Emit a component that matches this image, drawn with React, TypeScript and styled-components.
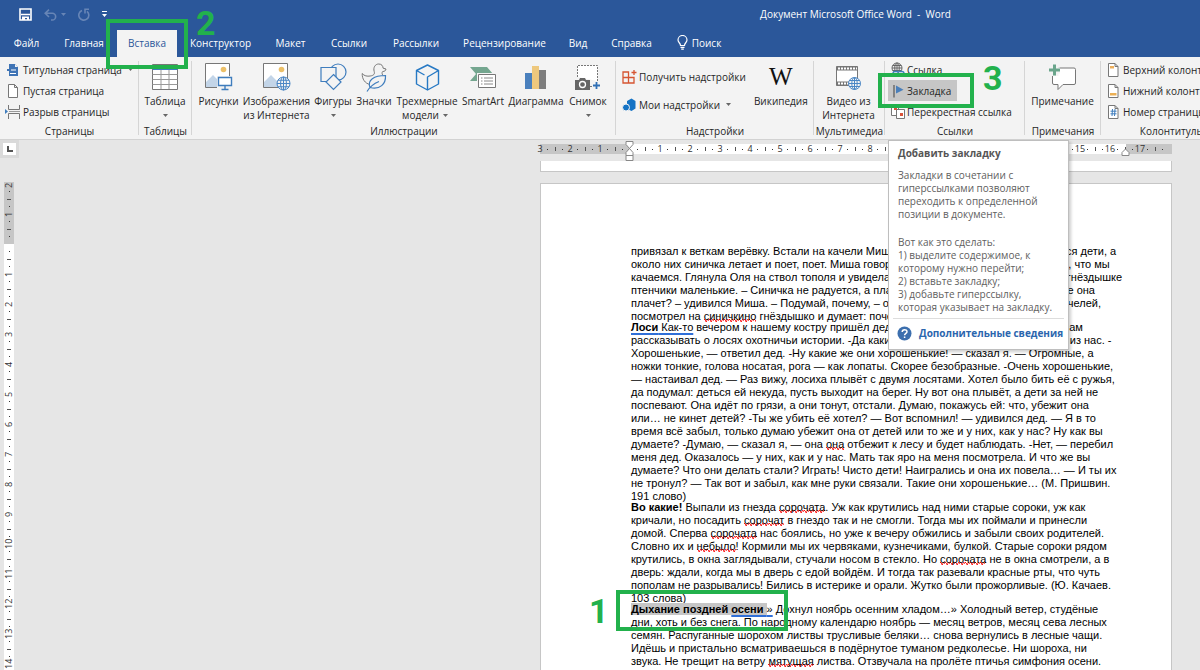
import React from "react";
import styled, { createGlobalStyle, css } from "styled-components";

const GREEN = "#22b14c";
const BLUE = "#2b579a";

const GlobalStyle = createGlobalStyle`
  *, *::before, *::after { box-sizing: border-box; }
  body { margin: 0; font-family: "Open Sans", "Noto Sans", sans-serif; font-size: 10px; color: #262626; }
  button { font: inherit; color: inherit; background: none; border: 0; padding: 0; margin: 0; }
  p, h2 { margin: 0; }
`;

const Window = styled.div`
  display: flex;
  flex-direction: column;
  height: 100vh;
  overflow: hidden;
  background: #e6e6e6;
`;

/* ---------- title bar and tabs ---------- */

const Header = styled.header`
  background: ${BLUE};
  color: #fff;
`;

const TitleRow = styled.div`
  display: flex;
  align-items: center;
  height: 29px;
  padding: 0 249px 0 19px;
`;

const QuickAccess = styled.div`
  display: flex;
  align-items: center;
  gap: 12px;
  flex: 1;
`;

const QuickButton = styled.button<{ $dim?: boolean }>`
  display: flex;
  align-items: center;
  gap: 4px;
  height: 16px;
  color: ${(p) => (p.$dim ? "#6785b6" : "#fff")};
`;

const Title = styled.div`
  white-space: pre;
  padding-bottom: 2px;
`;

const TabRow = styled.div`
  display: flex;
  align-items: flex-end;
  height: 28px;
`;

const Tab = styled.button<{ $active?: boolean; $w: number }>`
  position: relative;
  display: flex;
  align-items: center;
  justify-content: center;
  gap: 4px;
  flex: none;
  width: ${(p) => p.$w}px;
  height: 27px;
  padding-bottom: 2px;
  white-space: nowrap;
  ${(p) =>
    p.$active &&
    css`
      background: #f3f3f3;
      color: ${BLUE};
      margin: 0 1px 0 2px;
    `}
`;

/* ---------- green tutorial marks ---------- */

const Mark = styled.span<{ $x: number; $y: number; $w: number; $h: number }>`
  position: absolute;
  z-index: 5;
  left: ${(p) => p.$x}px;
  top: ${(p) => p.$y}px;
  width: ${(p) => p.$w}px;
  height: ${(p) => p.$h}px;
  border: 4px solid ${GREEN};
  pointer-events: none;
`;

const MarkNumber = styled.span<{ $x: number; $y: number }>`
  position: absolute;
  z-index: 5;
  left: ${(p) => p.$x}px;
  top: ${(p) => p.$y}px;
  font: bold 34px/34px Roboto, sans-serif;
  color: ${GREEN};
  pointer-events: none;
`;

/* ---------- ribbon ---------- */

const Ribbon = styled.div`
  display: flex;
  flex: none;
  height: 83px;
  background: #f3f3f3;
  border-bottom: 1px solid #d2d2d2;
`;

const Group = styled.section<{ $w: number }>`
  position: relative;
  display: flex;
  flex-direction: column;
  flex: none;
  width: ${(p) => p.$w}px;
  padding-top: 2px;
  &::after {
    content: "";
    position: absolute;
    right: 0;
    top: 4px;
    bottom: 4px;
    border-right: 1px solid #d5d5d5;
  }
`;

const GroupBody = styled.div<{ $pad?: number }>`
  display: flex;
  flex: 1;
  padding-left: ${(p) => p.$pad ?? 0}px;
`;

const GroupLabel = styled.div`
  height: 16px;
  line-height: 16px;
  text-align: center;
  white-space: nowrap;
`;

const Stack = styled.div<{ $spread?: boolean }>`
  display: flex;
  flex-direction: column;
  align-items: flex-start;
  ${(p) =>
    p.$spread &&
    css`
      gap: 7px;
      padding-top: 7px;
    `}
`;

const SmallButton = styled.button<{ $on?: boolean }>`
  position: relative;
  display: flex;
  align-items: center;
  gap: 2px;
  height: 21px;
  padding: 0 6px 0 3px;
  white-space: nowrap;
  background: ${(p) => (p.$on ? "#c6c6c6" : "none")};
  svg { flex: none; overflow: visible; }
`;

const BigButton = styled.button<{ $w: number }>`
  display: flex;
  flex-direction: column;
  align-items: center;
  flex: none;
  width: ${(p) => p.$w}px;
  line-height: 14px;
  white-space: nowrap;
`;

const IconBox = styled.span`
  display: flex;
  align-items: center;
  justify-content: center;
  height: 35px;
  padding-top: 1px;
`;

const WikiGlyph = styled.span`
  font: 25px/30px "Liberation Serif", serif;
  color: #111;
`;

const ArrowBox = styled.span`
  display: inline-flex;
  align-items: center;
  justify-content: center;
  height: 14px;
  padding: 0 4px;
  vertical-align: top;
`;

const Arrow = () => (
  <ArrowBox>
    <svg width="5" height="3" viewBox="0 0 5 3"><path d="M0 0h5L2.500 3z" fill="#666" /></svg>
  </ArrowBox>
);

/* ---------- screen tip ---------- */

const Tip = styled.div`
  position: absolute;
  z-index: 4;
  left: 3px;
  top: 83px;
  width: 181px;
  padding: 6px 4px 4px;
  background: #fff;
  border: 1px solid #bebebe;
  box-shadow: 2px 2px 3px rgba(0, 0, 0, 0.2);
  color: #606060;
  line-height: 13px;
  white-space: nowrap;
  svg { flex: none; }
`;

const TipTitle = styled.h2`
  padding: 0 5px;
  font-size: 10px;
  line-height: 13px;
  font-weight: bold;
  color: #555;
  margin-bottom: 9px;
`;

const TipText = styled.p`
  padding: 0 5px;
  margin-bottom: 15px;
  & + & { margin-bottom: 4px; }
`;

const TipFooter = styled.div`
  display: flex;
  align-items: center;
  gap: 7px;
  height: 27px;
  padding: 2px 0 0 4px;
  border-top: 1px solid #ddd;
`;

const TipLink = styled.a`
  color: #2b66ae;
  font-weight: bold;
  text-decoration: none;
`;

/* ---------- work area ---------- */

const WorkArea = styled.main`
  display: flex;
  flex: 1;
  min-height: 0;
  overflow: hidden;
`;

const SideColumn = styled.div`
  display: flex;
  flex-direction: column;
  flex: none;
  width: 19px;
`;

const TabSelector = styled.button`
  display: flex;
  align-items: center;
  justify-content: center;
  flex: none;
  width: 19px;
  height: 18px;
  border: 3px solid #dadada;
  background: #fff;
`;

const VRuler = styled.div`
  display: flex;
  flex-direction: column;
  flex: none;
  width: 10px;
  margin: 24px 0 0 4px;
  padding-top: 2px;
  background: linear-gradient(#c6c6c6 62px, #fff 62px);
`;

const HRuler = styled.div`
  position: relative;
  display: flex;
  flex: none;
  height: 10px;
  margin-top: 4px;
  background: linear-gradient(90deg, #c6c6c6 90px, #fff 90px, #fff calc(100% - 46px), #c6c6c6 calc(100% - 46px));
`;

const Cell = styled.div<{ $v?: boolean }>`
  position: relative;
  display: flex;
  flex: none;
  align-items: center;
  justify-content: space-evenly;
  font-size: 9px;
  line-height: 10px;
  color: #333;
  ${(p) =>
    p.$v
      ? css`flex-direction: column; width: 10px; height: 30px;`
      : css`width: 30px; height: 10px;`}
`;

const Num = styled.span<{ $v?: boolean; $start?: boolean }>`
  position: absolute;
  display: flex;
  justify-content: center;
  ${(p) =>
    p.$v
      ? css`left: 0; height: 16px; width: 10px; writing-mode: vertical-rl; transform: rotate(180deg);`
      : css`top: 0; width: 16px; height: 10px;`}
  ${(p) => (p.$v ? (p.$start ? "top: -7px;" : "bottom: -8px;") : p.$start ? "left: -8px;" : "right: -8px;")}
`;

const Dot = styled.i`
  width: 1px;
  height: 1px;
  background: #333;
`;

const Tick = styled.i<{ $v?: boolean }>`
  background: #555;
  ${(p) => (p.$v ? css`width: 4px; height: 1px;` : css`width: 1px; height: 4px;`)}
`;

const Center = styled.div`
  display: flex;
  flex-direction: column;
  flex: none;
  width: 632px;
  margin: 0 28px 0 auto;
`;

const RulerMarker = styled.svg<{ $x: number; $y: number }>`
  position: absolute;
  z-index: 2;
  left: ${(p) => p.$x}px;
  top: ${(p) => p.$y}px;
`;

const PreviousPage = styled.div`
  flex: none;
  height: 11px;
  margin-top: 7px;
  background: #fff;
  border: 1px solid #c6c6c6;
  border-top: 0;
`;

const Sheet = styled.article`
  position: relative;
  flex: 1 0 auto;
  margin-top: 11px;
  padding: 61px 0 0 90px;
  background: #fff;
  border: 1px solid #c6c6c6;
  border-bottom: 0;
  font: 11px/13px "Liberation Sans", Arial, sans-serif;
  color: #000;
`;

const Paragraph = styled.p`
  white-space: pre;
  margin-bottom: -2px;
`;

const Typo = styled.span`
  background-image:
    linear-gradient(45deg, transparent 65%, #f00 80%, transparent 90%),
    linear-gradient(135deg, transparent 5%, #f00 15%, transparent 25%),
    linear-gradient(135deg, transparent 45%, #f00 55%, transparent 65%),
    linear-gradient(45deg, transparent 25%, #f00 35%, transparent 50%);
  background-size: 5px 3px;
  background-position: 0 100%;
  background-repeat: repeat-x;
`;

const Grammar = styled.span`
  text-decoration: underline solid #2f6fd8 2px;
  text-underline-offset: 2px;
  text-decoration-skip-ink: none;
`;

const Selected = styled.span`
  background: #c6c6c6;
`;

/* ---------- icons ---------- */

const line = { fill: "none", stroke: "#777", strokeWidth: 1 };
const blueLine = { fill: "#f3f3f3", stroke: "#3f7dbd", strokeWidth: 1.2 };

const Globe = ({ cx, cy, r, color = "#4a86c5" }: { cx: number; cy: number; r: number; color?: string }) => (
  <g fill="#f3f3f3" stroke={color} strokeWidth="1">
    <circle cx={cx} cy={cy} r={r} />
    <ellipse cx={cx} cy={cy} rx={r * 0.45} ry={r} />
    <path d={`M${cx - r} ${cy}h${2 * r}M${cx} ${cy - r}v${2 * r}M${cx - r * 0.85} ${cy - r / 2}h${r * 1.7}M${cx - r * 0.85} ${cy + r / 2}h${r * 1.7}`} fill="none" />
  </g>
);

const SaveIcon = () => (
  <svg width="13" height="13" viewBox="0 0 13 13">
    <path d="M1 1h11v11H1z" fill="none" stroke="#fff" strokeWidth="1.600" />
    <path d="M2 6.500h9" fill="none" stroke="#fff" strokeWidth="1.500" />
    <path d="M3 8.500h7V12H8v-2H6v2H3z" fill="#fff" />
  </svg>
);
const UndoIcon = () => (
  <svg width="13" height="12" viewBox="0 0 13 12" fill="none" stroke="currentColor" strokeWidth="1.600">
    <path d="M5 .7 1.200 4.300 5 8M1.500 4.300h6.800a3.300 3.300 0 0 1 0 6.700H7" />
  </svg>
);
const RedoIcon = () => (
  <svg width="12" height="13" viewBox="0 0 12 13" fill="none" stroke="currentColor" strokeWidth="1.600">
    <path d="M4 2.500a5 5 0 1 0 5 .8M11 1.200H7v4.300" />
  </svg>
);
const CustomizeIcon = () => (
  <svg width="5" height="7" viewBox="0 0 5 7" fill="#fff"><path d="M0 0h5v1H0zM0 3h5L2.500 6z" /></svg>
);
const BulbIcon = () => (
  <svg width="11" height="15" viewBox="0 0 11 15" fill="none" stroke="#fff" strokeWidth="1.200">
    <path d="M3.500 10.500C3.500 8 1 7.500 1 5a4.500 4.500 0 0 1 9 0c0 2.500-2.500 3-2.500 5.500zM3.500 12.300h4M4.200 14.200h2.600" />
  </svg>
);
const CoverIcon = () => (
  <svg width="14" height="14" viewBox="0 0 14 14">
    <path d="M2 1h6l3 3v9H2z" fill="#3f74b5" />
    <path d="M8 1v3h3" fill="#f3f3f3" />
    <path d="M4 7h5M3 10.500h6" stroke="#fff" />
    <path d="M0 6h3v2H0z" fill="#3f74b5" />
  </svg>
);
const BlankIcon = () => (
  <svg width="14" height="14" viewBox="0 0 14 14">
    <path d="M1.500.5h6l3 3v10h-9zM7.500.5v3h3" {...line} fill="#fff" />
  </svg>
);
const BreakIcon = () => (
  <svg width="14" height="14" viewBox="2 0 14 14">
    <path d="M3.500 0v4.500h11V0M3.500 14V8.500h11V14" {...line} />
    <path d="M4 6.500h11" stroke="#999" />
    <path d="M0 4l3 2.500L0 9z" fill="#3f7dbd" />
  </svg>
);
const TableIcon = () => (
  <svg width="26" height="26" viewBox="0 0 26 26">
    <path d="M.5.5h25v25H.5z" fill="#fff" stroke="#777" />
    <path d="M.5 1h25v5H.5z" fill="#3f7dbd" />
    <path d="M.5 10.500h25M.5 15.500h25M.5 20.500h25M9 6v19M17 6v19" stroke="#999" />
  </svg>
);
const Picture = () => (
  <>
    <path d="M.5.5h24v24H.5z" fill="#fff" stroke="#777" />
    <path d="M1 24v-5l7-7 7 7 3-2 6 5v2z" fill="#c3d5e8" />
    <circle cx="18.500" cy="6.500" r="2.800" fill="#ecc069" />
  </>
);
const PicturesIcon = () => (
  <svg width="28" height="28" viewBox="0 0 28 28">
    <Picture />
    <path d="M12 13h15v15H12z" fill="#f3f3f3" />
    <path d="M13.500 14.500h13v8h-13z" fill="#fff" stroke="#3f7dbd" strokeWidth="1.400" />
    <path d="M20 23v3M16.500 26.500h7" stroke="#3f7dbd" strokeWidth="1.400" />
  </svg>
);
const WebPicturesIcon = () => (
  <svg width="28" height="28" viewBox="0 0 28 28">
    <Picture />
    <Globe cx={20.5} cy={20.5} r={6.5} />
  </svg>
);
const ShapesIcon = () => (
  <svg width="27" height="28" viewBox="0 0 27 28">
    <circle cx="18" cy="9" r="8" {...blueLine} />
    <path d="M1 4.500h15v14H1z" {...blueLine} />
    <path d="M13.500 11.500l7.500 7.500-7.500 7.500L6 19z" {...blueLine} />
  </svg>
);
const DuckIcon = () => (
  <svg width="26" height="29" viewBox="0 0 26 29">
    <path d="M9 21.500C4 20.500 1 16 1.200 10.500c2 2.500 5 3 8 2.500 3.500-.5 4.800-2 4-4.500-1.200-4 1-7.500 4.500-7.500 3 0 4.300 2 4.400 4.200l2.900.8c-.3 1.800-1.500 2.500-3.300 2.500-1 1.200-.7 2.300 0 3.500" {...line} />
    <path d="M9 24.500C6 17 13 12.500 24.500 12.500 25 21 19 27 9 24.500zM6 28.500c3-5 7-8 12-10" {...blueLine} />
  </svg>
);
const CubeIcon = () => (
  <svg width="25" height="27" viewBox="0 0 25 27">
    <path d="M12.500 1l11 5.500v13.500l-11 6-11-6V6.500zM1.500 6.500l8 4.500M12.500 26V13l11-6.500" fill="none" stroke="#2779c4" strokeWidth="1.400" strokeLinejoin="round" />
  </svg>
);
const SmartArtIcon = () => (
  <svg width="28" height="26" viewBox="0 0 28 26">
    <path d="M1 3h17l6 7-6 7H1l6-7z" fill="#74a68f" />
    <path d="M9.500 10.500h17v13h-17z" fill="#fff" stroke="#f3f3f3" strokeWidth="3" />
    <path d="M9.500 10.500h17v13h-17z" fill="#fff" stroke="#777" />
    <path d="M12 14h1.500M12 17h1.500M12 20h1.500M15 14h9M15 17h9M15 20h9" stroke="#888" />
  </svg>
);
const ChartIcon = () => (
  <svg width="22" height="24" viewBox="0 0 22 24">
    <path d="M0 8h7v16H0z" fill="#4a80bd" />
    <path d="M7 1h7v23H7z" fill="#eec87d" />
    <path d="M14 5h7v19h-7z" fill="#7d7d7d" />
  </svg>
);
const ScreenshotIcon = () => (
  <svg width="26" height="27" viewBox="0 0 26 27">
    <path d="M2.500 13V1.500h20V17M15 22.500h3" {...line} fill="#fff" strokeDasharray="2 1" />
    <path d="M0 16h4l1-2h5l1 2h4v10H0z" fill="#666" />
    <circle cx="7.500" cy="20.500" r="3" fill="none" stroke="#fff" strokeWidth="1.300" />
    <path d="M18 21.500h7M21.500 18v7" stroke="#2f6fb5" strokeWidth="1.800" />
  </svg>
);
const StoreIcon = () => (
  <svg width="15" height="16" viewBox="0 0 15 16" fill="none" stroke="#d65532" strokeWidth="1.300">
    <path d="M1 3h5.500v5.500H1zM1 8.500h5.500V14H1zM6.500 8.500H12V14H6.500zM9.500 3.500h5M12 1v5M6.500 8.500V6" />
  </svg>
);
const AddinsIcon = () => (
  <svg width="15" height="14" viewBox="0 0 15 14">
    <path d="M5 3 9.500.5l4 2.500v7.500l-4 2.500-3-1.500V7L5 5.500z" fill="#1473c5" />
    <circle cx="4" cy="9.500" r="3.500" fill="#1473c5" stroke="#f3f3f3" />
  </svg>
);
const VideoIcon = () => (
  <svg width="27" height="27" viewBox="0 0 27 27">
    <path d="M1.500 2.500h21v19h-21z" fill="#fff" stroke="#777" />
    <path d="M1.500 2.500h21v4h-21zM1.500 17.500h21v4h-21z" fill="#777" />
    <path d="M3 4.500h19M3 19.500h19" stroke="#fff" strokeWidth="2" strokeDasharray="2 1" />
    <Globe cx={19.5} cy={19.5} r={6} />
  </svg>
);
const LinkIcon = () => (
  <svg width="14" height="15" viewBox="0 0 14 15">
    <Globe cx={6} cy={6} r={5} color="#666" />
    <path d="M2 11.500a2 2 0 0 1 2-2h3v4H4a2 2 0 0 1-2-2zM8 9.500h3a2 2 0 0 1 0 4H8" fill="#f3f3f3" stroke="#3f7dbd" strokeWidth="1.400" />
  </svg>
);
const FlagIcon = () => (
  <svg width="14" height="14" viewBox="0 0 14 14">
    <path d="M3 1v12.500" stroke="#666" strokeWidth="1.400" />
    <path d="M5 1.500v8l7.500-3.800z" fill="#4a7fba" />
  </svg>
);
const CrossRefIcon = () => (
  <svg width="14" height="14" viewBox="0 0 14 14">
    <path d="M.5.5h7v10h-7z" fill="#fff" stroke="#777" />
    <path d="M5.500 4.500h8v9h-8z" fill="#fff" stroke="#777" />
    <path d="M3 2h3v3H3zM9 8h3v3H9z" fill="#d9533a" />
  </svg>
);
const CommentIcon = () => (
  <svg width="28" height="27" viewBox="0 0 28 27">
    <path d="M3.500 5.500a1.500 1.500 0 0 1 1.500-1.500h20a1.500 1.500 0 0 1 1.500 1.500V19a1.500 1.500 0 0 1-1.500 1.500H14L9 25.500v-5H5A1.500 1.500 0 0 1 3.500 19z" fill="#fff" stroke="#777" />
    <path d="M0 3.500h11v6H0zM2.500 0h7v12h-7z" fill="#f3f3f3" />
    <path d="M0 6h11M5.500.5v11" stroke="#6aa58b" strokeWidth="3" />
  </svg>
);
const PageIcon = ({ kind }: { kind: "top" | "bottom" | "number" }) => (
  <svg width="14" height="14" viewBox="0 0 14 14">
    <path d="M1.500.5h6.500l3 3v10h-9.500zM8 .5v3h3" {...line} fill="#fff" />
    {kind === "top" && <path d="M3 3h4v2.500H3z" fill="#ecae5c" />}
    {kind === "bottom" && <path d="M3 9h6.500v2.500H3z" fill="#ecb055" />}
    {kind === "number" && <path d="M5.500 4 5 11M8 4l-.5 7M3.500 6.200h6M3.500 8.800h6" stroke="#3f7dbd" fill="none" />}
  </svg>
);
const HelpIcon = () => (
  <svg width="15" height="15" viewBox="0 0 15 15">
    <circle cx="7.500" cy="7.500" r="7" fill="#3c6fae" />
    <path d="M5.200 6c0-3 4.800-3 4.800-.3 0 1.700-2.400 1.800-2.400 3.500M7.600 10.500v1.600" fill="none" stroke="#fff" strokeWidth="1.500" />
  </svg>
);

/* ---------- rulers ---------- */

const RulerCell = ({ n, start, v }: { n?: number; start?: number; v?: boolean }) => (
  <Cell $v={v}>
    {start !== undefined && <Num $v={v} $start>{start}</Num>}
    <Dot />
    <Tick $v={v} />
    <Dot />
    {n !== undefined && <Num $v={v}>{n}</Num>}
  </Cell>
);

const range = (from: number, to: number) => Array.from({ length: to - from + 1 }, (_, i) => from + i);

/* ---------- ribbon buttons ---------- */

const bigButtons = [
  { w: 45, icon: <PicturesIcon />, label: ["Рисунки"] },
  { w: 71, icon: <WebPicturesIcon />, label: ["Изображения", "из Интернета"] },
  { w: 42, icon: <ShapesIcon />, label: ["Фигуры"], arrow: true },
  { w: 40, icon: <DuckIcon />, label: ["Значки"] },
  { w: 66, icon: <CubeIcon />, label: ["Трехмерные", "модели"], arrow: true },
  { w: 46, icon: <SmartArtIcon />, label: ["SmartArt"] },
  { w: 60, icon: <ChartIcon />, label: ["Диаграмма"] },
  { w: 44, icon: <ScreenshotIcon />, label: ["Снимок"], arrow: true },
];

const Big = ({ w, icon, label, arrow }: { w: number; icon: React.ReactNode; label: string[]; arrow?: boolean }) => (
  <BigButton $w={w}>
    <IconBox>{icon}</IconBox>
    <span>{label[0]}</span>
    <span>
      {label[1]}
      {arrow && <Arrow />}
    </span>
  </BigButton>
);

export default function App() {
  return (
    <Window>
      <GlobalStyle />
      <Header>
        <TitleRow>
          <QuickAccess>
            <QuickButton aria-label="Сохранить"><SaveIcon /></QuickButton>
            <QuickButton aria-label="Отменить" $dim>
              <UndoIcon />
              <svg width="5" height="3" viewBox="0 0 5 3"><path d="M0 0h5L2.500 3z" fill="currentColor" /></svg>
            </QuickButton>
            <QuickButton aria-label="Повторить" $dim><RedoIcon /></QuickButton>
            <QuickButton aria-label="Настройка панели"><CustomizeIcon /></QuickButton>
          </QuickAccess>
          <Title>{"Документ Microsoft Office Word  -  Word"}</Title>
        </TitleRow>
        <TabRow role="tablist">
          <Tab role="tab" $w={53}>Файл</Tab>
          <Tab role="tab" $w={62}>Главная</Tab>
          <Tab role="tab" $w={60} $active aria-selected>
            Вставка
            <Mark $x={-11} $y={-11} $w={82} $h={50} />
            <MarkNumber $x={79} $y={-24}>2</MarkNumber>
          </Tab>
          <Tab role="tab" $w={85}>Конструктор</Tab>
          <Tab role="tab" $w={55}>Макет</Tab>
          <Tab role="tab" $w={62}>Ссылки</Tab>
          <Tab role="tab" $w={72}>Рассылки</Tab>
          <Tab role="tab" $w={105}>Рецензирование</Tab>
          <Tab role="tab" $w={42}>Вид</Tab>
          <Tab role="tab" $w={65}>Справка</Tab>
          <Tab $w={70}><BulbIcon />Поиск</Tab>
        </TabRow>
      </Header>

      <Ribbon>
        <Group $w={139}>
          <GroupBody $pad={4}>
            <Stack>
              <SmallButton><CoverIcon />Титульная страница<Arrow /></SmallButton>
              <SmallButton><BlankIcon />Пустая страница</SmallButton>
              <SmallButton><BreakIcon />Разрыв страницы</SmallButton>
            </Stack>
          </GroupBody>
          <GroupLabel>Страницы</GroupLabel>
        </Group>
        <Group $w={53}>
          <GroupBody>
            <Big w={52} icon={<TableIcon />} label={["Таблица"]} arrow />
          </GroupBody>
          <GroupLabel>Таблицы</GroupLabel>
        </Group>
        <Group $w={424}>
          <GroupBody $pad={4}>
            {bigButtons.map((b) => <Big key={b.label[0]} {...b} />)}
          </GroupBody>
          <GroupLabel>Иллюстрации</GroupLabel>
        </Group>
        <Group $w={198}>
          <GroupBody $pad={3}>
            <Stack $spread>
              <SmallButton><StoreIcon />Получить надстройки</SmallButton>
              <SmallButton><AddinsIcon />Мои надстройки<Arrow /></SmallButton>
            </Stack>
            <Big w={58} icon={<WikiGlyph>W</WikiGlyph>} label={["Википедия"]} />
          </GroupBody>
          <GroupLabel>Надстройки</GroupLabel>
        </Group>
        <Group $w={71}>
          <GroupBody>
            <Big w={69} icon={<VideoIcon />} label={["Видео из", "Интернета"]} />
          </GroupBody>
          <GroupLabel>Мультимедиа</GroupLabel>
        </Group>
        <Group $w={140}>
          <GroupBody $pad={3}>
            <Stack>
              <SmallButton><LinkIcon />Ссылка</SmallButton>
              <SmallButton $on>
                <FlagIcon />Закладка
                <Mark $x={-10} $y={-7} $w={96} $h={35} />
                <MarkNumber $x={95} $y={-19}>3</MarkNumber>
              </SmallButton>
              <SmallButton><CrossRefIcon />Перекрестная ссылка</SmallButton>
            </Stack>
          </GroupBody>
          <GroupLabel>Ссылки</GroupLabel>
          <Tip role="tooltip">
            <TipTitle>Добавить закладку</TipTitle>
            <TipText>
              Закладки в сочетании с<br />гиперссылками позволяют<br />переходить к определенной<br />позиции в документе.
            </TipText>
            <TipText>
              Вот как это сделать:<br />1) выделите содержимое, к<br />которому нужно перейти;<br />2) вставьте закладку;<br />3) добавьте гиперссылку,<br />которая указывает на закладку.
            </TipText>
            <TipFooter>
              <HelpIcon />
              <TipLink href="#help">Дополнительные сведения</TipLink>
            </TipFooter>
          </Tip>
        </Group>
        <Group $w={76}>
          <GroupBody>
            <Big w={75} icon={<CommentIcon />} label={["Примечание"]} />
          </GroupBody>
          <GroupLabel>Примечания</GroupLabel>
        </Group>
        <Group $w={142}>
          <GroupBody $pad={3}>
            <Stack>
              <SmallButton><PageIcon kind="top" />Верхний колонтитул<Arrow /></SmallButton>
              <SmallButton><PageIcon kind="bottom" />Нижний колонтитул<Arrow /></SmallButton>
              <SmallButton><PageIcon kind="number" />Номер страницы<Arrow /></SmallButton>
            </Stack>
          </GroupBody>
          <GroupLabel>Колонтитулы</GroupLabel>
        </Group>
      </Ribbon>

      <WorkArea>
        <SideColumn>
          <TabSelector aria-label="Позиция табуляции">
            <svg width="6" height="6" viewBox="0 0 6 6"><path d="M1 0v5h5" fill="none" stroke="#555" strokeWidth="2" /></svg>
          </TabSelector>
          <VRuler>
            <RulerCell v start={2} n={1} />
            <RulerCell v />
            {range(1, 15).map((n) => <RulerCell key={n} v n={n} />)}
          </VRuler>
        </SideColumn>
        <Center>
          <HRuler>
            <RulerCell start={3} n={2} />
            <RulerCell n={1} />
            <RulerCell />
            {range(1, 17).map((n) => <RulerCell key={n} n={n} />)}
            <RulerCell />
            <RulerMarker $x={85} $y={-3} width="9" height="20" viewBox="0 0 9 20" fill="#fff" stroke="#888">
              <path d="M1 .5h7v3L4.500 7.500 8 11.500v3H1v-3l3.500-4L1 3.500zM1 14.500h7v5H1z" />
            </RulerMarker>
            <RulerMarker $x={581} $y={4} width="9" height="8" viewBox="0 0 9 8" fill="#fff" stroke="#888">
              <path d="M1 7.500V4.500L4.500 1 8 4.500v3z" />
            </RulerMarker>
          </HRuler>
          <PreviousPage />
          <Sheet>
            <Paragraph>
              {`привязал к веткам верёвку. Встали на качели Миша и Оля. Качаются и громко смеются дети, а
около них синичка летает и поет, поет. Миша говорит: – Синичка споёт песню про это, что мы
качаемся. Глянула Оля на ствол тополя и увидела там дупло. А в дупле том сидят в гнёздышке
птенчики маленькие. – Синичка не радуется, а плачет, – сказала Олечка. – Почему же она
плачет? – удивился Миша. – Подумай, почему, – ответила тогда Оля. Миша слез с качелей,
посмотрел на `}
              <Typo>синичкино</Typo> гнёздышко и думает: почему она плачет?
            </Paragraph>
            <Paragraph>
              <Grammar><b>Лоси</b> Как-то</Grammar>
              {` вечером к нашему костру пришёл дед из соседней деревни и начал он нам
рассказывать о лосях охотничьи истории. -Да какие же они? — спросил у него кто-то из нас. -
Хорошенькие, — ответил дед. -Ну какие же они хорошенькие! — сказал я. — Огромные, а
ножки тонкие, голова носатая, рога — как лопаты. Скорее безобразные. -Очень хорошенькие,
— настаивал дед. — Раз вижу, лосиха плывёт с двумя лосятами. Хотел было бить её с ружья,
да подумал: деться ей некуда, пусть выходит на берег. Ну вот она плывёт, а дети за ней не
поспевают. Она идёт по грязи, а они тонут, отстали. Думаю, покажусь ей: что, убежит она
или… не кинет детей? -Ты же убить её хотел? — Вот вспомнил! — удивился дед. — Я в то
время всё забыл, только думаю убежит она от детей или то же и у них, как у нас? Ну как вы
думаете? -Думаю, — сказал я, — она `}
              <Typo>она</Typo>
              {` отбежит к лесу и будет наблюдать. -Нет, — перебил
меня дед. Оказалось — у них, как и у нас. Мать так яро на меня посмотрела. И что же вы
думаете? Что они делать стали? Играть! Чисто дети! Наигрались и она их повела… — И ты их
не тронул? — Так вот и забыл, как мне руки связали. Такие они хорошенькие… (М. Пришвин.
191 слово)`}
            </Paragraph>
            <Paragraph>
              <b>Во какие!</b> Выпали из гнезда <Typo>сорочата</Typo>
              {`. Уж как крутились над ними старые сороки, уж как
кричали, но посадить `}
              <Typo>сорочат</Typo>
              {` в гнездо так и не смогли. Тогда мы их поймали и принесли
домой. Сперва `}
              <Typo>сорочата</Typo>
              {` нас боялись, но уже к вечеру обжились и забыли своих родителей.
Словно их и `}
              <Typo>небыло</Typo>
              {`! Кормили мы их червяками, кузнечиками, булкой. Старые сороки рядом
крутились, в окна заглядывали, стучали носом в стекло. Но `}
              <Typo>сорочата</Typo>
              {` не в окна смотрели, а в
дверь: ждали, когда мы в дверь с едой войдём. И тогда так разевали красные рты, что чуть
пополам не разрывались! Бились в истерике и орали. Жутко были прожорливые. (Ю. Качаев.
103 слова)`}
            </Paragraph>
            <Paragraph>
              <Selected><b>Дыхание поздней <Grammar>осени </Grammar></b></Selected>
              <Grammar>»</Grammar>
              {` Дохнул ноябрь осенним хладом…» Холодный ветер, студёные
дни, хоть и без снега. По народному календарю ноябрь — месяц ветров, месяц сева лесных
семян. Распуганные шорохом листвы трусливые беляки… снова вернулись в лесные чащи.
Идёшь и пристально всматриваешься в подёрнутое туманом редколесье. Ни шороха, ни
звука. Не трещит на ветру `}
              <Typo>мятущая</Typo>
              {` листва. Отзвучала на пролёте птичья симфония осени.
Лишь изредка стукнет дятел. Тишина.`}
            </Paragraph>
            <Mark $x={75} $y={406} $w={172} $h={41} />
            <MarkNumber $x={48} $y={410}>1</MarkNumber>
          </Sheet>
        </Center>
      </WorkArea>
    </Window>
  );
}
